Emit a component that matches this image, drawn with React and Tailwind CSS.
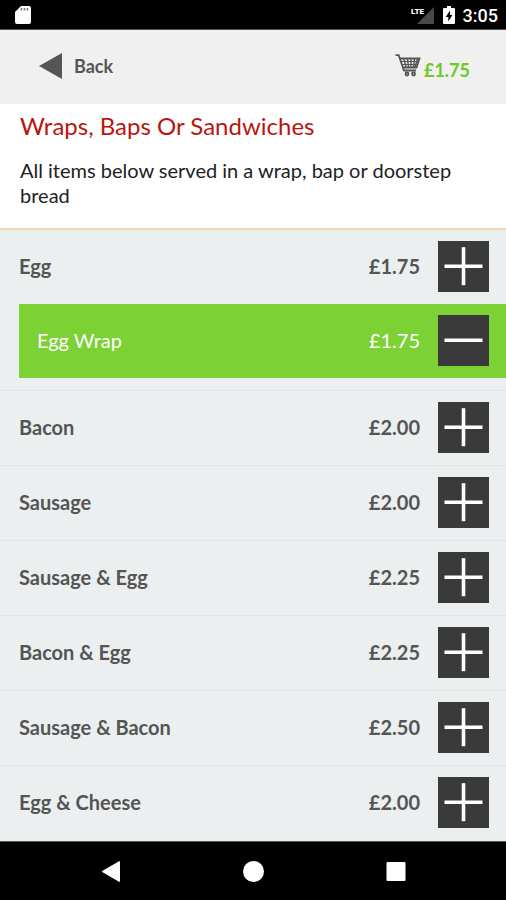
import React from 'react';

const items = [
  { name: 'Egg', price: '£1.75', selected: [{ name: 'Egg Wrap', price: '£1.75' }] },
  { name: 'Bacon', price: '£2.00' },
  { name: 'Sausage', price: '£2.00' },
  { name: 'Sausage & Egg', price: '£2.25' },
  { name: 'Bacon & Egg', price: '£2.25' },
  { name: 'Sausage & Bacon', price: '£2.50' },
  { name: 'Egg & Cheese', price: '£2.00' }
];

const StatusBar = () => (
  <div className="flex h-[30px] items-center justify-between border-b border-[#555] bg-black pl-[15px] pr-2">
    <svg viewBox="0 0 16 20" className="h-5 w-4" aria-hidden="true">
      <path d="M6 1h8a2 2 0 0 1 2 2v14a2 2 0 0 1-2 2H2a2 2 0 0 1-2-2V7z" fill="#fff" />
      <path d="M6.5 3v2.5M9.5 3v2.5M12.5 3v2.5" stroke="#777" strokeWidth="1.6" />
    </svg>
    <div className="flex items-center">
      <svg viewBox="0 0 23 20" className="mr-[9px] h-5 w-[23px]" aria-hidden="true">
        <path d="M23 2v17H6z" fill="#484848" />
        <text x="0" y="9" fill="#fff" fontFamily="Roboto, sans-serif" fontSize="8" fontWeight="900">LTE</text>
      </svg>
      <svg viewBox="0 0 12 20" className="mr-2 h-5 w-3" aria-hidden="true">
        <path d="M4 1h4v2h3a1 1 0 0 1 1 1v14a1 1 0 0 1-1 1H1a1 1 0 0 1-1-1V4a1 1 0 0 1 1-1h3z" fill="#fff" />
        <path d="M7 5.5 2.8 12h2.5v4.5L9.4 10H7z" fill="#000" />
      </svg>
      <span className="pt-0.5 font-[Roboto,sans-serif] text-lg font-medium text-white">3:05</span>
    </div>
  </div>
);

const CartIcon = () => (
  <svg viewBox="0 0 26 23" className="h-[23px] w-[26px]" fill="none" stroke="#555" aria-hidden="true">
    <path d="M0.5 1.2h3.2L9 16.5h12" strokeWidth="1.8" />
    <path d="M5 4.5h19.5L21.5 13.5H8.5" strokeWidth="1.8" />
    <path d="M6 7.5h17M7 10.5h15" strokeWidth="1" />
    <path d="m9 5 2 8M12.5 5l1 8M16 5v8M19.5 5l-1 8M22.5 5 20 13" strokeWidth="1.4" />
    <circle cx="12" cy="20" r="1.5" strokeWidth="1.8" />
    <circle cx="18.5" cy="20" r="1.5" strokeWidth="1.8" />
  </svg>
);

const SquareButton = ({ label, minus }) => (
  <button type="button" aria-label={label} className="size-[51px] shrink-0 bg-[#3a3a3a]">
    <svg viewBox="0 0 51 51" className="size-full" stroke="#fff" strokeWidth="3.6" aria-hidden="true">
      <path d="M6.5 25.2h38" />
      {!minus && <path d="M25.5 6.2v38" />}
    </svg>
  </button>
);

const Row = ({ name, price, minus }) => (
  <div className="flex items-center pb-3 pr-[17px] pt-[11px] text-xl">
    <span className="flex-1 pb-0.5">{name}</span>
    <span className="mr-[18px] pb-0.5">{price}</span>
    <SquareButton label={minus ? `Remove ${name}` : `Add ${name}`} minus={minus} />
  </div>
);

const MenuItem = ({ item }) => (
  <li className="border-b border-[#e2e6e7] pl-[19px] last:border-b-0">
    <div className="font-bold text-[#555]">
      <Row name={item.name} price={item.price} />
    </div>
    {item.selected && (
      <ul className="mb-3">
        {item.selected.map((choice) => (
          <li key={choice.name} className="bg-[#7cd135] pl-[18px] text-white">
            <Row name={choice.name} price={choice.price} minus />
          </li>
        ))}
      </ul>
    )}
  </li>
);

const NavBar = () => (
  <nav className="flex h-[59px] items-center justify-center gap-[122px] border-t border-[#555] bg-black">
    <button type="button" aria-label="Back">
      <svg viewBox="0 0 21 21" className="size-[21px]" fill="#fff" aria-hidden="true">
        <path d="M20 0.8v19.4a.7.7 0 0 1-1 .5L2.6 11.3a.9.9 0 0 1 0-1.6L19 .3a.7.7 0 0 1 1 .5z" />
      </svg>
    </button>
    <button type="button" aria-label="Home">
      <svg viewBox="0 0 21 21" className="size-[21px]" fill="#fff" aria-hidden="true">
        <circle cx="10.5" cy="10.5" r="10.5" />
      </svg>
    </button>
    <button type="button" aria-label="Overview">
      <svg viewBox="0 0 21 21" className="size-[21px]" fill="#fff" aria-hidden="true">
        <rect x="0.5" y="1" width="19" height="19" rx="1" />
      </svg>
    </button>
  </nav>
);

export default function App() {
  return (
    <div className="flex min-h-screen flex-col bg-[#ebeff0] font-[Lato,sans-serif]">
      <StatusBar />
      <header className="flex h-[74px] items-center justify-between bg-[#f0f0f0] pb-[3px] pl-[39px] pr-9">
        <button type="button" className="flex items-center gap-3 text-lg font-bold text-[#555]">
          <svg viewBox="0 0 23 26" className="h-[26px] w-[23px]" fill="#555" aria-hidden="true">
            <path d="M23 0v26L0 13z" />
          </svg>
          Back
        </button>
        <button type="button" className="flex items-center gap-[3px] text-lg font-bold text-[#6cc926]">
          <CartIcon />
          <span className="pt-2">£1.75</span>
        </button>
      </header>
      <section className="border-b-2 border-[#f0d5b0] bg-white px-5 pb-5 pt-2">
        <h1 className="text-2xl leading-7 text-[#b8150f]">Wraps, Baps Or Sandwiches</h1>
        <p className="mt-[18px] text-xl leading-[25px] text-[#222]">
          All items below served in a wrap, bap or doorstep bread
        </p>
      </section>
      <main className="flex-1">
        <ul>
          {items.map((item) => (
            <MenuItem key={item.name} item={item} />
          ))}
        </ul>
      </main>
      <NavBar />
    </div>
  );
}
